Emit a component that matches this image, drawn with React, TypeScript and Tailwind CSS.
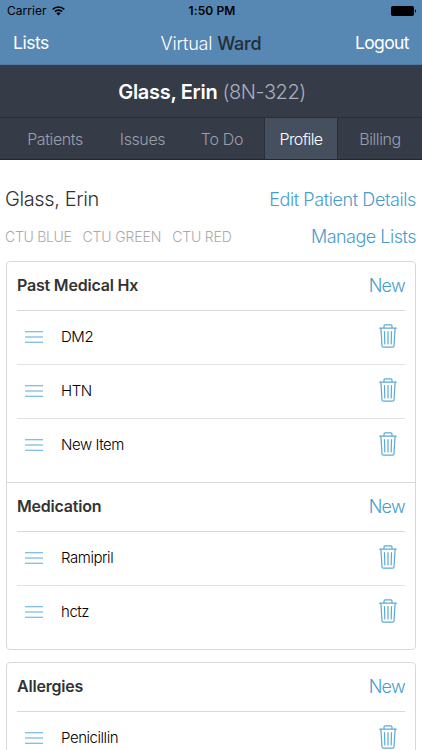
import clsx from "clsx";

const tabs = [
  { name: "Patients", style: "w-[100px] tracking-[-0.4px]" },
  { name: "Issues", style: "w-[75px] tracking-[-0.4px]" },
  { name: "To Do", style: "w-[84px] tracking-[-0.3px]" },
  { name: "Profile", style: "w-[74px] tracking-[-0.6px]" },
  { name: "Billing", style: "w-[84px] tracking-[-0.4px]" },
];

const cards = [
  [
    { title: "Past Medical Hx", items: ["DM2", "HTN", "New Item"] },
    { title: "Medication", items: ["Ramipril", "hctz"] },
  ],
  [{ title: "Allergies", items: ["Penicillin"] }],
];

export default function App() {
  return (
    <div className="h-[750px] w-[422px] overflow-hidden bg-white font-['Inter','Liberation_Sans',sans-serif] font-light text-black">
      <StatusBar />
      <NavBar />
      <PatientBar />

      <main className="pt-[23px] pr-[6px] pl-[5px]">
        <div className="flex h-8 items-center justify-between">
          <h2 className="text-[20px] tracking-[-0.4px] text-[#333]">Glass, Erin</h2>
          <a className="text-[18px] tracking-[-0.4px] text-[#4a9dcb]">Edit Patient Details</a>
        </div>
        <div className="mt-[5px] flex h-8 items-center justify-between">
          <div className="flex gap-[11px] text-[14px] tracking-[-0.15px] text-[#aaa]">
            <span className="tracking-[-0.3px]">CTU BLUE</span>
            <span>CTU GREEN</span>
            <span>CTU RED</span>
          </div>
          <a className="text-[18px] tracking-[-0.5px] text-[#4a9dcb]">Manage Lists</a>
        </div>

        <div className="mt-[9px] ml-px space-y-3">
          {cards.map((sections) => (
            <div
              key={sections[0].title}
              className="divide-y divide-[#d9d9d9] rounded-[4px] border border-[#d9d9d9]"
            >
              {sections.map((s) => (
                <Section key={s.title} title={s.title} items={s.items} />
              ))}
            </div>
          ))}
        </div>
      </main>
    </div>
  );
}

function StatusBar() {
  return (
    <div className="grid h-[22px] grid-cols-3 items-center bg-[#5787b3] pr-[5px] pl-[7px] text-[12px]">
      <div className="flex items-center gap-[5px] font-normal">
        <span className="tracking-[0.05px]">Carrier</span>
        <svg
          className="mb-px"
          width="13"
          height="10"
          viewBox="0 0 13 10"
          fill="none"
          stroke="#000"
          strokeWidth="1.6"
        >
          <path d="M0.7 3.4a8.2 8.2 0 0 1 11.6 0" />
          <path d="M2.9 5.6a5.1 5.1 0 0 1 7.2 0" />
          <path d="M6.5 9.6 4.3 7.3a3.1 3.1 0 0 1 4.4 0z" fill="#000" stroke="none" />
        </svg>
      </div>
      <span className="text-center font-semibold tracking-[0.1px]">1:50 PM</span>
      <svg className="justify-self-end" width="26" height="10" viewBox="0 0 26 10">
        <rect width="23" height="10" rx="1.8" />
        <path d="M24 3.3c1.5.4 1.5 3 0 3.4z" />
      </svg>
    </div>
  );
}

function NavBar() {
  return (
    <header className="grid h-[43px] grid-cols-3 items-center border-b border-[#4f7ca7] bg-[#5787b3] px-[13px] text-[17.5px] text-white">
      <a className="font-normal tracking-[-0.45px]">Lists</a>
      <h1 className="pt-px text-center text-[18px] tracking-[-0.2px] whitespace-nowrap">
        Virtual <span className="font-medium text-[#222d38]">Ward</span>
      </h1>
      <a className="text-right font-normal tracking-[-0.6px]">Logout</a>
    </header>
  );
}

function PatientBar() {
  return (
    <div className="border-t border-b border-t-[#26405a] border-b-[#22262e] bg-[#353b47]">
      <div className="flex h-[51px] items-center justify-center pl-[2px] text-[20px] tracking-[-0.45px] text-[#a9afbf]">
        <p className="whitespace-pre">
          <span className="font-semibold tracking-[-0.3px] text-white">Glass, Erin</span> (8N-322)
        </p>
      </div>
      <nav className="flex h-[42px] border-t border-[#292e38] pl-[5px] text-[16px]">
        {tabs.map((tab) => (
          <a
            key={tab.name}
            className={clsx(
              "flex items-center justify-center whitespace-nowrap",
              tab.style,
              tab.name === "Profile"
                ? "border-x border-[#292e38] bg-[#464f5d] text-white"
                : "text-[#9a9fad]",
            )}
          >
            {tab.name}
          </a>
        ))}
      </nav>
    </div>
  );
}

function Section({ title, items }: { title: string; items: string[] }) {
  return (
    <section className="px-[10px] pb-[10px]">
      <div className="flex h-[49px] items-center justify-between border-b border-[#d9d9d9] pb-[2px]">
        <h3 className="text-[16px] font-semibold tracking-[-0.2px] text-[#333]">{title}</h3>
        <a className="text-[18px] tracking-[-0.7px] text-[#4a9dcb]">New</a>
      </div>
      <ul className="divide-y divide-[#e2e2e2]">
        {items.map((item) => (
          <li key={item} className="flex h-[54px] items-center pr-[8px] pb-px pl-[8px] last:h-[53px]">
            <DragHandle />
            <span className="ml-[18px] flex-1 text-[15px] tracking-[-0.45px] text-black">{item}</span>
            <TrashIcon />
          </li>
        ))}
      </ul>
    </section>
  );
}

function DragHandle() {
  return (
    <svg width="18" height="12" viewBox="0 0 18 12" stroke="#5aaad6" strokeWidth="1.1">
      <path d="M0 .8h18M0 6h18M0 11.2h18" />
    </svg>
  );
}

function TrashIcon() {
  return (
    <svg
      className="mb-[2px]"
      width="18"
      height="24"
      viewBox="0 0 18 24"
      fill="none"
      stroke="#5aaad6"
      strokeWidth="1.2"
      strokeLinecap="round"
      strokeLinejoin="round"
    >
      <path d="M.7 4.200h16.600M5 4V2Q5 .8 6.200 .8h5.600Q13 .8 13 2V4" />
      <path d="M1.900 4.400 3 22q.1 1.200 1.300 1.200h9.400q1.200 0 1.300-1.200L16.100 4.400" />
      <path d="M5.500 7.500 5.800 20M9 7.500V20M12.500 7.500 12.200 20" />
    </svg>
  );
}
